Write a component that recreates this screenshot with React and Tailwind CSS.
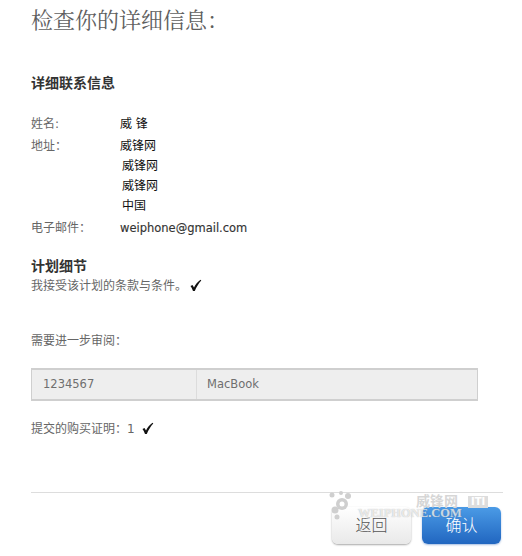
const cjk = "font-['DejaVu_Sans','Noto_Sans_CJK_SC',sans-serif]";

function Check({ className }) {
  return (
    <svg width="13" height="13" viewBox="0 0 13 13" className={className}>
      <path d="M1.5 7 L3.5 6 L5 8.5 C6.5 5.5 8.5 3 11.5 0.8 L12.3 1.5 C9.5 4.5 7.5 8 5.8 12 L4 12 C3.3 10 2.5 8.5 1.5 7 Z" fill="#111" />
    </svg>
  );
}

function Row({ label, children, className = '' }) {
  return (
    <div className={`flex h-5 items-center ${className}`}>
      <span className="w-[89px] text-[12px] text-[#666]">{label}</span>
      <span className="text-[12px] text-[#111]">{children}</span>
    </div>
  );
}

export default function App() {
  return (
    <div className={`relative w-[522px] h-[556px] overflow-hidden bg-white ${cjk}`}>
      <div className="pl-[31px] pt-[3px]">
        <h1 className="h-[32px] text-[22px] leading-[32px] text-[#5f5f5f] font-normal font-['Noto_Serif_CJK_SC','Noto_Sans_CJK_SC',serif]">检查你的详细信息：</h1>

        <h2 className="mt-[38px] h-5 text-[14px] leading-5 font-bold text-[#333]">详细联系信息</h2>

        <div className="mt-[21px]">
          <Row label="姓名:">威 锋</Row>
          <Row label="地址：" className="mt-[2px]">威锋网</Row>
          <Row label=""><span className="pl-[2px]">威锋网</span></Row>
          <Row label=""><span className="pl-[2px]">威锋网</span></Row>
          <Row label=""><span className="pl-[2px]">中国</span></Row>
          <Row label="电子邮件：" className="mt-[2px]"><span className="text-[11.5px] text-[#333] [-webkit-text-stroke:0.15px_#333]">weiphone@gmail.com</span></Row>
        </div>

        <h2 className="mt-[18px] h-5 text-[14px] leading-5 font-bold text-[#333]">计划细节</h2>
        <div className="flex h-5 items-center gap-[2px] text-[12px] text-[#666]">
          我接受该计划的条款与条件。
          <Check className="-translate-y-px" />
        </div>

        <p className="mt-[35px] h-5 text-[12px] leading-5 text-[#666]">需要进一步审阅：</p>

        <div className="mt-[17px] flex h-[33px] w-[447px] border border-[#cfcfcf] border-y-2 bg-[#eeeeee] text-[11.5px] text-[#6f6f6f]">
          <div className="flex w-[165px] items-center border-r border-[#dcdcdc] pl-[11px]">1234567</div>
          <div className="flex flex-1 items-center pl-[10px]">MacBook</div>
        </div>

        <div className="mt-[18px] flex h-5 items-center gap-[6px] text-[12px] text-[#666]">
          提交的购买证明：1
          <Check className="-translate-y-px" />
        </div>

        <div className="mt-[53px] w-[472px] border-t border-[#dddddd]" />

        <div className="mt-[14px] flex w-[470px] justify-end gap-[11px]">
          <button className="h-[37px] w-[79px] rounded-[6px] bg-gradient-to-b from-white to-[#e9e9e9] text-[16px] font-light text-[#555] shadow-[0_1px_2px_rgba(0,0,0,0.35)]">返回</button>
          <button className="h-[37px] w-[79px] rounded-[6px] bg-gradient-to-b from-[#4b9be6] to-[#2166c0] text-[16px] font-light text-white shadow-[0_1px_2px_rgba(30,90,180,0.4)]">确认</button>
        </div>
      </div>

      {/* watermark */}
      <div className="absolute left-[328px] top-[490px] h-[32px] w-[170px] pointer-events-none">
        <svg width="30" height="30" viewBox="0 0 30 30" className="absolute left-0 top-0">
          <g fill="#cfcfcf">
            <circle cx="4" cy="5" r="2.5" />
            <circle cx="13" cy="3" r="2" />
            <circle cx="20" cy="6" r="3" />
            <circle cx="14" cy="14" r="6" />
            <circle cx="7" cy="20" r="3.5" />
            <circle cx="9" cy="27" r="2.5" />
          </g>
          <circle cx="14" cy="14" r="2.5" fill="#fff" />
        </svg>
        <span className="absolute left-[30px] top-[17px] font-['Liberation_Serif',serif] text-[12.5px] font-bold leading-none text-white/70 [text-shadow:0_0_1px_rgba(120,120,120,0.6)]">WEIPHONE.COM</span>
        <span className="absolute left-[88px] top-[4px] text-[14px] font-bold leading-none text-[#d6d6d6]">威锋网</span>
        <span className="absolute left-[140px] top-[6px] bg-[#dddddd] px-[3px] text-[10px] font-bold leading-[12px] text-white">ITI</span>
      </div>
    </div>
  );
}
